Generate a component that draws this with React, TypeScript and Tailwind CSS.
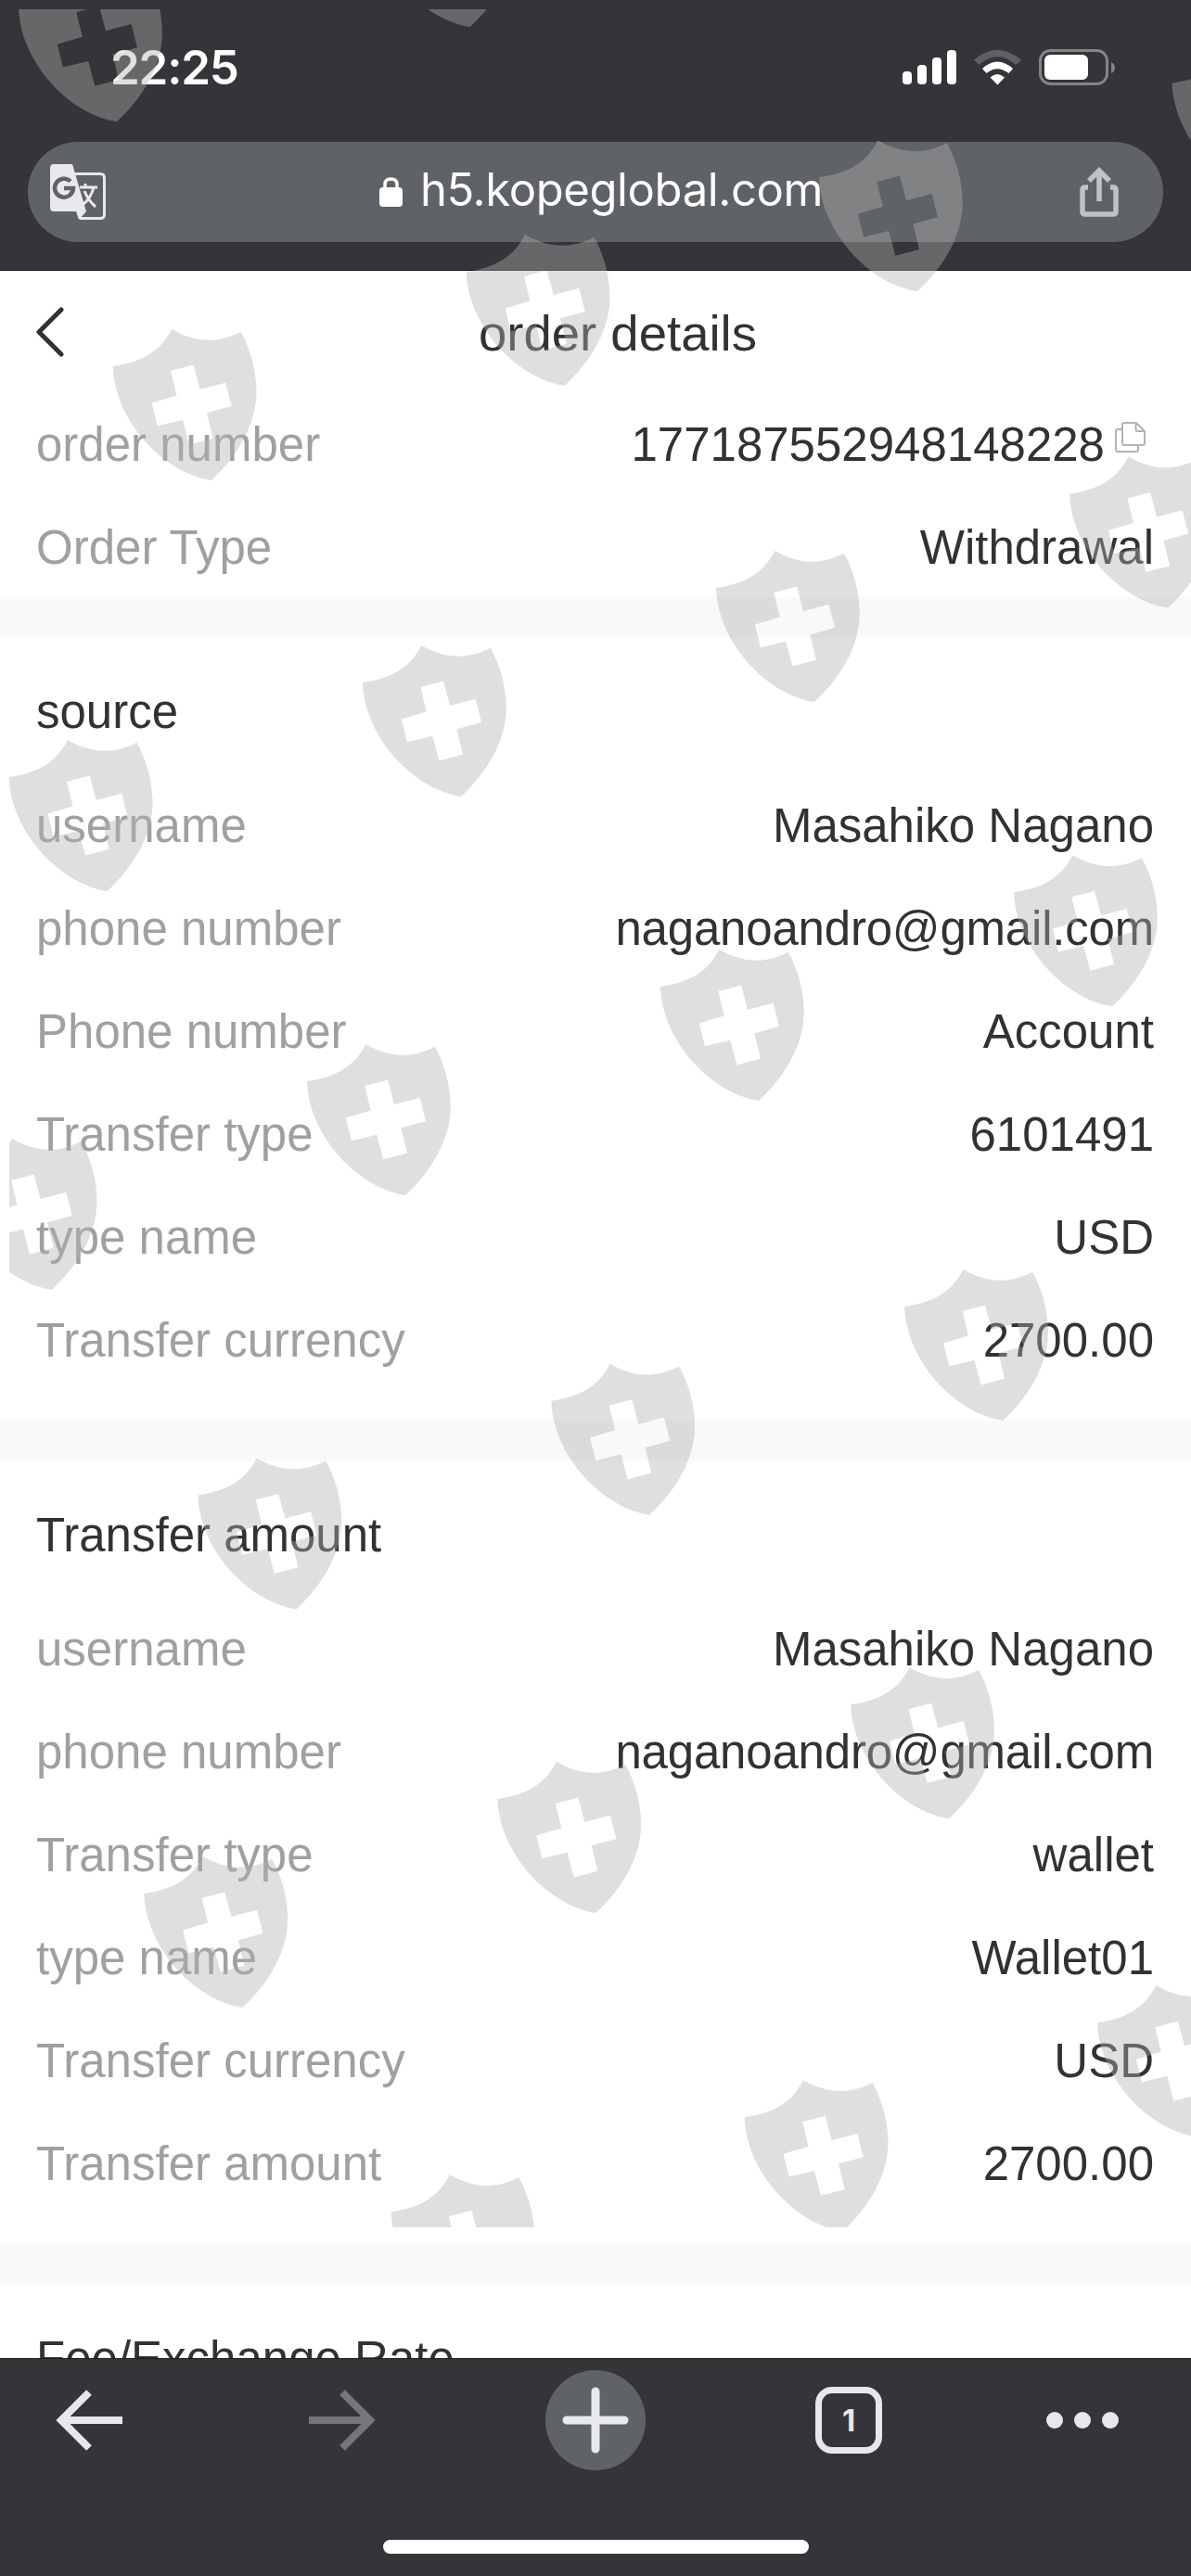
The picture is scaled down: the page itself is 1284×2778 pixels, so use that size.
import React from "react";

const SHIELDS: [number, number][] = [
  [83.3, -31.8], [464, -134],
  [185, 355], [566, 253], [946.3, 151.3], [1327, 49.6],
  [73, 798], [454.3, 696], [835.3, 594], [1216.4, 492.6],
  [13, 1228], [394.3, 1126], [775.3, 1024], [1156.3, 922.3],
  [276.7, 1572.5], [657.6, 1470.7], [1038.5, 1369],
  [218.7, 2002], [599.7, 1900], [980.5, 1798.3],
  [484.8, 2345.3], [866, 2243.3], [1246.3, 2141.3],
];

function Watermark() {
  return (
    <svg className="pointer-events-none absolute inset-0 h-[2778px] w-[1284px]" viewBox="0 0 1284 2778">
      <defs>
        <clipPath id="area"><rect x="10" y="10" width="1274" height="2392" /></clipPath>
        <path
          id="shield"
          fillRule="evenodd"
          d="M0 0C23 13 47 17 74.5 2.7C85 22 91 43 91.5 66C92 101 72 136 42.7 163C-10 155 -62 97 -63.3 40C-35 36 -13 26 0 0ZM-1 45L5.5 71.5L-21.5 79.5L-15.3 104.3L12 97.7L19 124.5L44.7 117.7L38 90.3L64.7 83L58.3 57.7L30.7 65L23.7 38.5Z"
        />
      </defs>
      <g clipPath="url(#area)" fill="rgb(176,176,176)" fillOpacity="0.406">
        {SHIELDS.map(([x, y]) => (
          <use key={`${x}-${y}`} href="#shield" x={x} y={y} />
        ))}
      </g>
    </svg>
  );
}

function StatusBar() {
  return (
    <div className="flex h-[153px] items-start justify-between pl-[119px] pr-[82px]">
      <div className="mt-[41px] font-[Inter] text-[51px] font-semibold leading-[64px] tracking-[-1.2px] text-white">22:25</div>
      <svg className="mt-[50px]" width="230" height="46" viewBox="972 50 230 46">
        <g fill="#fff">
          <rect x="973" y="77" width="10" height="14" rx="4" />
          <rect x="989" y="70" width="10" height="21" rx="4" />
          <rect x="1005" y="62" width="10" height="29" rx="4" />
          <rect x="1021" y="54" width="10" height="37" rx="4" />
          <path d="M1059 74Q1075 59 1092 74L1087.500 79Q1075 69.500 1063.500 79Z" />
          <path d="M1067.500 83.500Q1075 76.500 1083 83.500L1075.500 91.500Z" />
          <rect x="1126" y="59" width="47" height="27" rx="6" />
        </g>
        <path d="M1050 64.500Q1075 43 1101 64.500L1095.500 70Q1075 52.500 1055.500 70Z" fill="#605f64" />
        <rect x="1121.500" y="54.500" width="72" height="36" rx="11" fill="none" stroke="#85848a" strokeWidth="3" />
        <path d="M1198 67Q1202 69 1202 73Q1202 77 1198 79Z" fill="#85848a" />
      </svg>
    </div>
  );
}

function AddressBar() {
  return (
    <div className="mx-[30px] flex h-[108px] items-center justify-between rounded-full bg-[#5f6266] pl-[24px] pr-[48px]">
      <svg width="60" height="60" viewBox="54 177 60 60">
        <path d="M80 187.500H108Q112.500 187.500 112.500 192V231Q112.500 235.500 108 235.500H86" fill="none" stroke="#e8e8ed" strokeWidth="3" />
        <path d="M58 177H78L93 228L85 237L82 228H58Q54 228 54 224V181Q54 177 58 177Z" fill="#e8e8ed" />
        <path d="M76 195.500A10 10 0 1 0 79 203H69" fill="none" stroke="#5f6266" strokeWidth="4.500" />
        <path d="M86 202H105M92 198V202M101 202Q98 214 89 221M91 206Q95 216 103 223" fill="none" stroke="#e8e8ed" strokeWidth="3" />
      </svg>
      <div className="ml-[18px] flex items-center gap-[19px] text-white">
        <svg width="25" height="32" viewBox="0 0 25 32">
          <rect y="11" width="25" height="21" rx="4" fill="#fff" />
          <path d="M6 13V8Q6 2 12.500 2T19 8V13" fill="none" stroke="#fff" strokeWidth="3.500" />
        </svg>
        <span className="-mt-[4px] font-[Inter] text-[49px] leading-[60px] tracking-[-0.4px]">h5.kopeglobal.com</span>
      </div>
      <svg width="42" height="54" viewBox="0 0 42 54" fill="none" stroke="#c0c3c6" strokeWidth="5.500">
        <path d="M9 22H6Q3 22 3 25V48Q3 51 6 51H36Q39 51 39 48V25Q39 22 36 22H33M21 37V4M10 15L21 4L32 15" />
      </svg>
    </div>
  );
}

function Row({ label, value, copy }: { label: string; value: string; copy?: boolean }) {
  return (
    <div className="flex h-[111px] items-center justify-between pl-[39px] pr-[40px] pt-[6px]">
      <span className="text-[#a0a0a0]">{label}</span>
      <span className={`flex items-center text-[#323233] ${value.includes("@") ? "tracking-[-0.2px]" : ""}`}>
        {value}
        {copy && (
          <svg className="mb-[16px] ml-[11px] mr-[9px]" width="33" height="33" viewBox="0 0 33 33" fill="none" stroke="#b0b3bb" strokeWidth="2" strokeLinejoin="round">
            <path d="M10 1H23L32 10V23Q32 25 30 25H10Q8 25 8 23V3Q8 1 10 1ZM22.500 1V8Q22.500 10 24.500 10H32M8 8H3Q1 8 1 10V30Q1 32 3 32H23Q25 32 25 30V25" />
          </svg>
        )}
      </span>
    </div>
  );
}

function Section({ title, rows, className }: { title: string; rows: [string, string][]; className: string }) {
  return (
    <section className={className}>
      <h2 className="flex h-[145px] items-center px-[39px] pt-[17px] text-[#323233]">{title}</h2>
      {rows.map(([l, v]) => <Row key={l} label={l} value={v} />)}
    </section>
  );
}

function Toolbar() {
  return (
    <footer className="h-[235px] border-t border-[#1c1b20] bg-[#353439]">
      <div className="flex h-[132px] items-center pl-[60px]">
        <svg width="73" height="66" viewBox="0 0 73 66" fill="none" stroke="#e8e7ed" strokeWidth="8">
          <path d="M72 33H6M36 3L6 33L36 63" />
        </svg>
        <svg className="ml-[199px]" width="73" height="66" viewBox="0 0 73 66" fill="none" stroke="#76757a" strokeWidth="8">
          <path d="M1 33H67M37 3L67 33L37 63" />
        </svg>
        <div className="ml-[183px] flex size-[108px] items-center justify-center rounded-full bg-[#5f6266]">
          <svg width="72" height="72" viewBox="0 0 72 72" fill="none" stroke="#e8e9ec" strokeWidth="9" strokeLinecap="round">
            <path d="M5 36H67M36 5V67" />
          </svg>
        </div>
        <div className="ml-[183px] flex size-[72px] items-center justify-center rounded-[18px] border-[7px] border-[#e8e7ed] font-[Inter] text-[33px] font-bold text-[#e8e7ed]">1</div>
        <div className="ml-[177px] flex gap-[12px]">
          <i className="size-[18px] rounded-full bg-[#e8e7ed]" />
          <i className="size-[18px] rounded-full bg-[#e8e7ed]" />
          <i className="size-[18px] rounded-full bg-[#e8e7ed]" />
        </div>
      </div>
      <div className="mx-auto mt-[63px] h-[15px] w-[459px] rounded-full bg-white" />
    </footer>
  );
}

export default function App() {
  return (
    <div className="relative flex h-[2778px] w-[1284px] flex-col overflow-hidden bg-white font-['Liberation_Sans',sans-serif] text-[51px] leading-[60px]">
      <header className="h-[292px] shrink-0 border-b border-[#111] bg-[#353439]">
        <StatusBar />
        <AddressBar />
      </header>
      <main className="h-[2251px] shrink-0 overflow-hidden">
        <div className="flex h-[129px] items-center pl-[39px] pt-[6px]">
          <svg className="-mt-[4px]" width="32" height="54" viewBox="0 0 32 54" fill="none" stroke="#323233" strokeWidth="5" strokeLinecap="round" strokeLinejoin="round">
            <path d="M27 3L3 27L27 51" />
          </svg>
          <h1 className="ml-[445px] text-[54.5px] text-[#323233]">order details</h1>
        </div>
        <Row label="order number" value="177187552948148228" copy />
        <Row label="Order Type" value="Withdrawal" />
        <div className="mt-px h-[43px] bg-[#f9f9f9]" />
        <Section
          className="pb-[34px]"
          title="source"
          rows={[
            ["username", "Masahiko Nagano"],
            ["phone number", "naganoandro@gmail.com"],
            ["Phone number", "Account"],
            ["Transfer type", "6101491"],
            ["type name", "USD"],
            ["Transfer currency", "2700.00"],
          ]}
        />
        <div className="h-[43px] bg-[#f9f9f9]" />
        <Section
          className="pb-[34px]"
          title="Transfer amount"
          rows={[
            ["username", "Masahiko Nagano"],
            ["phone number", "naganoandro@gmail.com"],
            ["Transfer type", "wallet"],
            ["type name", "Wallet01"],
            ["Transfer currency", "USD"],
            ["Transfer amount", "2700.00"],
          ]}
        />
        <div className="h-[43px] bg-[#f9f9f9]" />
        <Section className="" title="Fee/Exchange Rate" rows={[]} />
      </main>
      <Toolbar />
      <Watermark />
    </div>
  );
}
